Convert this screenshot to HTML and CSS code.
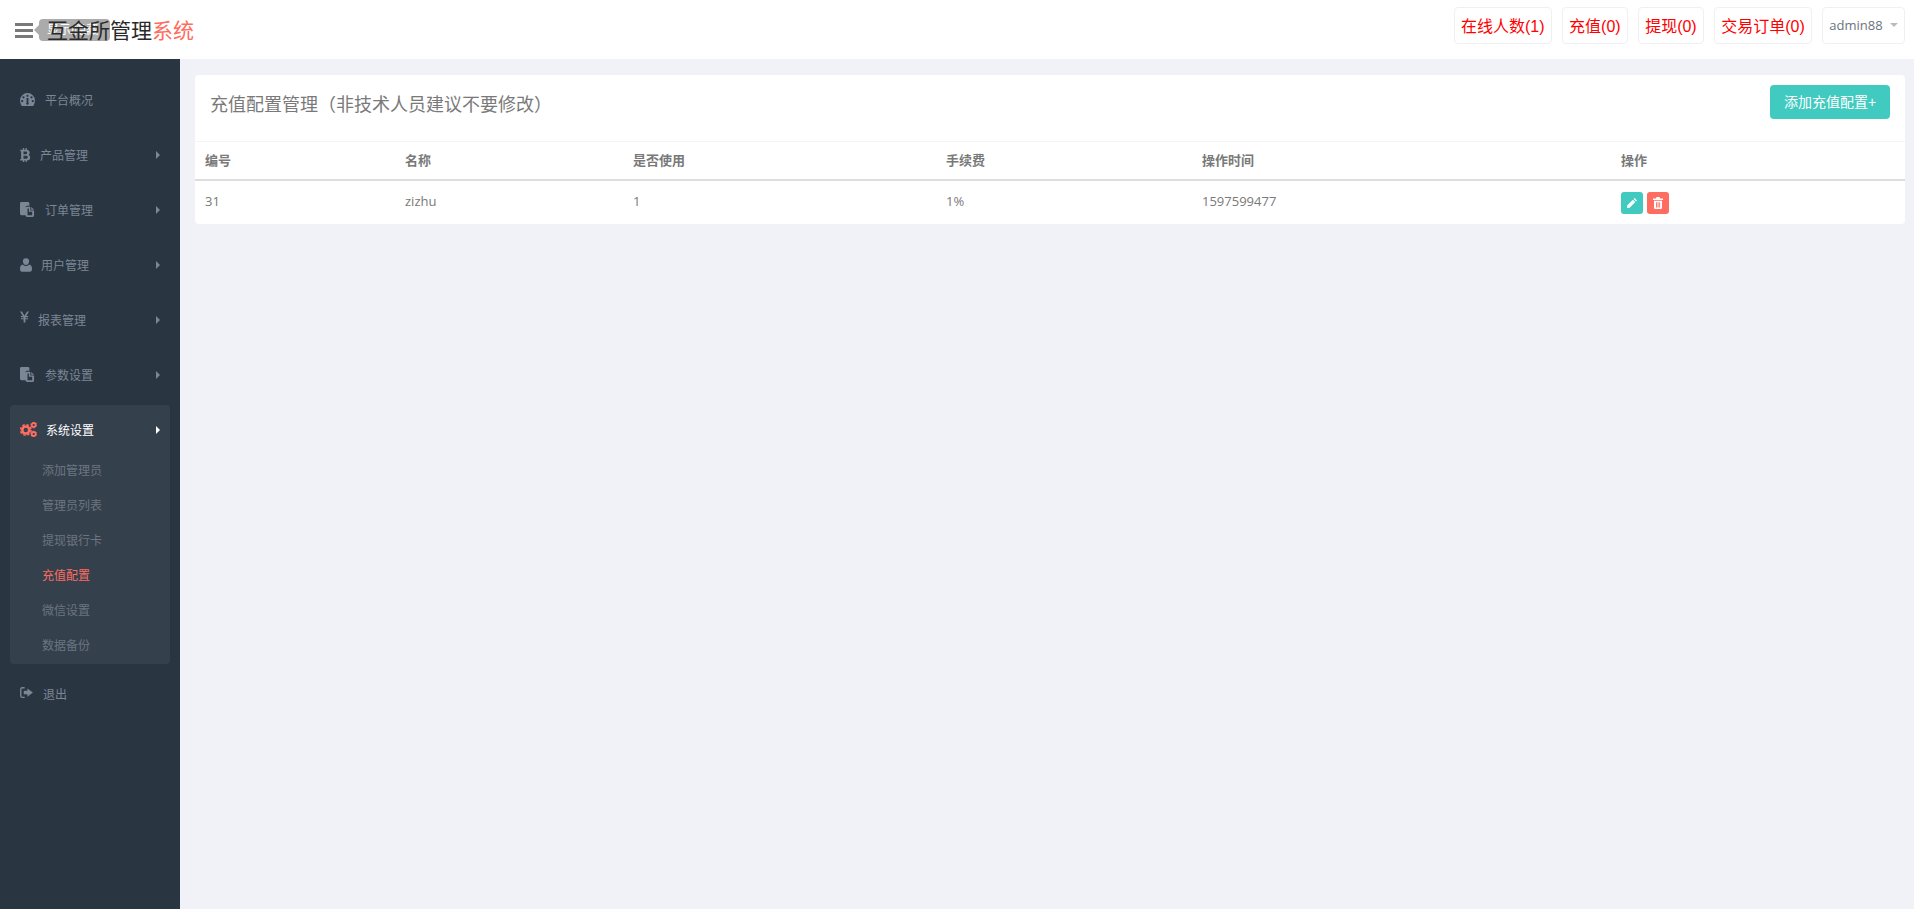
FILE: index.html
```html
<!DOCTYPE html>
<html lang="zh-CN">
<head>
<meta charset="utf-8">
<title>互金所管理系统</title>
<link rel="stylesheet" href="styles.css">
</head>
<body>
<header class="topbar">
  <div class="brand">
    <button class="burger" aria-label="menu"><svg width="18" height="15" viewBox="0 0 18 15"><path d="M0 0h18v3H0zM0 6h18v3H0zM0 12h18v3H0z" fill="#797979"/></svg></button>
    <span class="tip">显示/隐藏</span>
    <span class="logo">互金所管理<em>系统</em></span>
  </div>
  <div class="top-actions">
    <a class="pill">在线人数(1)</a>
    <a class="pill">充值(0)</a>
    <a class="pill">提现(0)</a>
    <a class="pill">交易订单(0)</a>
    <a class="pill user">admin88<i class="caret"></i></a>
  </div>
</header>
<div class="body">
  <aside class="side">
    <a class="item"><svg class="ic dash" viewBox="0 0 16 14"><path fill-rule="evenodd" d="M8 0a8 8 0 0 0-8 8c0 2.400.8 4.400 2 6h12c1.200-1.600 2-3.600 2-6a8 8 0 0 0-8-8zM8 1.800a1.200 1.200 0 1 1 0 2.400 1.200 1.200 0 0 1 0-2.400zM3.700 3.500a1.200 1.200 0 1 1 0 2.400 1.200 1.200 0 0 1 0-2.400zM12.300 3.500a1.200 1.200 0 1 1 0 2.400 1.200 1.200 0 0 1 0-2.400zM2.300 7.500a1.200 1.200 0 1 1 0 2.400 1.200 1.200 0 0 1 0-2.400zM13.700 7.500a1.200 1.200 0 1 1 0 2.400 1.200 1.200 0 0 1 0-2.400zM6.900 5.500h2.200l-.2 4.700a1.400 1.400 0 1 1-1.800 0z"/></svg><span class="t1">平台概况</span></a>
    <a class="item"><svg class="ic btc" viewBox="0 0 12 16"><path fill-rule="evenodd" d="M3 0h1.500v2H6V0h1.500v2.100c2 .3 3.300 1.400 3.300 3.200 0 1.200-.6 2.100-1.700 2.600 1.400.4 2.300 1.400 2.300 2.900 0 2.100-1.500 3.300-3.900 3.500V16H6v-1.700H4.500V16H3v-1.700H0V12.500h1V3.800H0V2h3zM3.700 4v3h2.600c1 0 1.600-.6 1.600-1.500S7.300 4 6.300 4zM3.700 8.800v3.500h3c1.200 0 1.900-.7 1.900-1.750S7.900 8.800 6.700 8.800z"/></svg><span class="t2">产品管理</span><i class="arrow"></i></a>
    <a class="item"><svg class="ic wide" viewBox="0 0 16 16"><use href="#files"/></svg><span class="t3">订单管理</span><i class="arrow"></i></a>
    <a class="item"><svg class="ic person" viewBox="0 0 14 16"><path d="M7 0a3.600 3.600 0 0 1 3.600 3.800C10.600 6 9 8 7 8S3.400 6 3.400 3.800A3.600 3.600 0 0 1 7 0zM3.300 7.400C4.200 8.500 5.500 9.200 7 9.200s2.800-.7 3.700-1.800c2 .4 3.300 2 3.300 4.800 0 2.900-.9 3.800-2.300 3.800H2.300C.9 16 0 15.100 0 12.200c0-2.800 1.300-4.400 3.300-4.800z"/></svg><span class="t4">用户管理</span><i class="arrow"></i></a>
    <a class="item"><svg class="ic yen" viewBox="0 0 10 12"><path d="M0 0h2.200L5 4.700 7.800 0H10L6.900 5H9v1.200H6V7.300h3v1.200H6V12H4V8.500H1V7.300h3V6.200H1V5h2.100z"/></svg><span class="t5">报表管理</span><i class="arrow"></i></a>
    <a class="item"><svg class="ic wide" viewBox="0 0 16 16"><use href="#files"/></svg><span class="t3">参数设置</span><i class="arrow"></i></a>
    <div class="group">
      <a class="item cur"><svg class="gears" viewBox="0 0 17 15"><circle cx="5.800" cy="8" r="3.500" fill="none" stroke="#ff6c60" stroke-width="2.600"/><circle cx="5.800" cy="8" r="5.300" fill="none" stroke="#ff6c60" stroke-width="1.500" stroke-dasharray="2.400 1.760"/><circle cx="13.700" cy="3" r="2" fill="none" stroke="#ff6c60" stroke-width="1.800"/><circle cx="13.700" cy="3" r="2.900" fill="none" stroke="#ff6c60" stroke-width="1" stroke-dasharray="1.500 1.540"/><circle cx="13.700" cy="12" r="2" fill="none" stroke="#ff6c60" stroke-width="1.800"/><circle cx="13.700" cy="12" r="2.900" fill="none" stroke="#ff6c60" stroke-width="1" stroke-dasharray="1.500 1.540"/></svg><span class="t6">系统设置</span><i class="arrow"></i></a>
      <a class="sub">添加管理员</a>
      <a class="sub">管理员列表</a>
      <a class="sub">提现银行卡</a>
      <a class="sub on">充值配置</a>
      <a class="sub">微信设置</a>
      <a class="sub">数据备份</a>
    </div>
    <a class="item"><svg class="ic out" viewBox="0 0 14 12"><path d="M5 0H2.500A2.500 2.500 0 0 0 0 2.500v7A2.500 2.500 0 0 0 2.500 12H5v-1.500H2.500a1 1 0 0 1-1-1v-7a1 1 0 0 1 1-1H5zM8 1.500 14 6 8 10.500V8H4V4h4z"/></svg><span class="t7">退出</span></a>
  </aside>
  <main class="main">
    <section class="card">
      <div class="card-head">
        <h1>充值配置管理（非技术人员建议不要修改）</h1>
        <button class="add">添加充值配置+</button>
      </div>
      <table>
        <thead><tr><th class="c1">编号</th><th class="c2">名称</th><th class="c3">是否使用</th><th class="c4">手续费</th><th class="c5">操作时间</th><th>操作</th></tr></thead>
        <tbody><tr><td>31</td><td>zizhu</td><td>1</td><td>1%</td><td>1597599477</td>
          <td class="ops">
            <button class="op edit"><svg viewBox="0 0 12 12" width="12" height="12"><path d="M8.600 1 11 3.400 10 4.400 7.600 2zM6.900 2.700 9.300 5.100 3.700 10.700 1 11l.3-2.700z" fill="#fff"/></svg></button>
            <button class="op del"><svg viewBox="0 0 12 12" width="12" height="12"><path d="M4.500 0h3L8 1.500h3V3H1V1.500h3zM2 3.800h8V11a1 1 0 0 1-1 1H3a1 1 0 0 1-1-1zM4 5.200V10.500h.9V5.200zM5.600 5.200V10.500h.9V5.200zM7.200 5.200V10.500h.9V5.200z" fill="#fff" fill-rule="evenodd"/></svg></button>
          </td></tr></tbody>
      </table>
    </section>
  </main>
</div>
<svg class="defs" width="0" height="0"><defs><symbol id="files" viewBox="0 0 16 16"><path fill-rule="evenodd" d="M0 1.500A1.500 1.500 0 0 1 1.500 0h7A1.500 1.500 0 0 1 10 1.500V4H7.500A1.500 1.500 0 0 0 6 5.500V14H1.500A1.500 1.500 0 0 1 0 12.500zM7.500 5H11v4h4v5.500a1.500 1.500 0 0 1-1.500 1.500h-6A1.500 1.500 0 0 1 6 14.500v-8A1.500 1.500 0 0 1 7.500 5zM8 7v7h5v-3.500H9.500V7zM12 5.300 15 8.300h-3z"/></symbol></defs></svg>
</body>
</html>
```
FILE: styles.css
```css
* { box-sizing: border-box; }
html, body { margin: 0; height: 100%; }
body {
  background: #f1f2f7;
  font-family: "Liberation Sans", "Noto Sans CJK SC", sans-serif;
  font-size: 14px;
  color: #797979;
  height: 909px;
  overflow: hidden;
}
.defs { position: absolute; }
.topbar {
  height: 59px;
  background: #fff;
  display: flex;
  justify-content: space-between;
  align-items: flex-start;
  padding: 7px 9px 0 15px;
}
.brand { display: flex; align-items: center; position: relative; margin-top: 7px; }
.burger { border: 0; padding: 0; background: none; display: flex; width: 18px; height: 15px; margin: 2px 14px 0 0; }
.tip {
  position: absolute;
  left: 24px;
  top: 5px;
  width: 71px;
  height: 22px;
  background: #ababab;
  border-radius: 4px;
  color: #fff;
  font-size: 12px;
  line-height: 22px;
  padding-left: 8px;
  white-space: nowrap;
}
.tip::before {
  content: "";
  position: absolute;
  left: -5px;
  top: 6px;
  border: 5px solid transparent;
  border-left: 0;
  border-right-color: #ababab;
}
.logo {
  position: relative;
  font-size: 21px;
  line-height: 30px;
  color: #2a2a2a;
  font-family: "Noto Sans CJK SC", sans-serif;
}
.logo em { font-style: normal; color: #ff6c60; }
.top-actions { display: flex; gap: 10px; }
.pill {
  height: 37px;
  padding: 0 6.25px 2px;
  display: flex;
  align-items: center;
  justify-content: center;
  border: 1px solid #eff0f4;
  border-radius: 4px;
  background: #fff;
  color: #f00;
  font-size: 16px;
}
.user { color: #6c7480; font-family: "Open Sans", sans-serif; font-size: 13px; width: 83px; }
.caret { margin-left: 7px; border: 4px solid transparent; border-top: 4px solid #bbb; border-bottom: 0; }
.body { display: flex; height: 850px; }
.side {
  width: 180px;
  flex: none;
  background: #2a3542;
  padding: 13px 10px 0;
  display: flex;
  flex-direction: column;
}
.item {
  height: 55px;
  display: flex;
  align-items: center;
  padding-left: 10px;
  position: relative;
  color: #7c8695;
  font-size: 12px;
  flex: none;
}
.ic { fill: #7c8695; flex: none; }
.dash { width: 15px; height: 13px; }
.btc { width: 11px; height: 14px; }
.wide { width: 15px; height: 15px; }
.person { width: 12px; height: 14px; }
.yen { width: 9px; height: 12px; margin-top: -5px; }
.out { width: 13px; height: 11px; margin-top: -3px; }
.gears { width: 17px; height: 15px; flex: none; }
.t1 { margin-left: 10px; }
.t2 { margin-left: 9px; }
.t3 { margin-left: 10px; }
.t4 { margin-left: 9px; }
.t5 { margin-left: 9px; }
.t6 { margin-left: 9px; }
.t7 { margin-left: 10px; font-size: 12px; }
.arrow {
  position: absolute;
  left: 146px;
  top: 24px;
  border: 4px solid transparent;
  border-left: 4px solid #7c8695;
  border-right: 0;
}
.group {
  margin-top: 3px;
  height: 259px;
  background: #35404d;
  border-radius: 4px;
  flex: none;
  margin-bottom: 2px;
}
.cur { height: 49px; color: #fff; }
.cur .arrow { border-left-color: #fff; top: 21px; }
.sub {
  display: block;
  height: 35px;
  line-height: 35px;
  padding-left: 32px;
  font-size: 12px;
  color: #6c7581;
}
.on { color: #ff6c60; }
.main { flex: 1; padding: 16px 9px 0 15px; min-width: 0; }
.card { background: #fff; border-radius: 4px; height: 149px; overflow: hidden; }
.card-head {
  height: 67px;
  display: flex;
  justify-content: space-between;
  align-items: flex-start;
  padding: 0 15px;
  border-bottom: 1px solid #f4f4f4;
}
h1 { margin: 16px 0 0; font-weight: 400; font-size: 18px; line-height: 29px; color: #797979; }
.add {
  margin-top: 10px;
  width: 120px;
  height: 34px;
  padding: 0 0 2px;
  border: 0;
  border-radius: 4px;
  background: #41cac0;
  color: #fff;
  font: 14px "Liberation Sans", "Noto Sans CJK SC", sans-serif;
}
table { width: 100%; border-collapse: collapse; table-layout: fixed; font: 13px "Open Sans", "Noto Sans CJK SC", sans-serif; }
th { text-align: left; font-weight: 700; font-size: 13px; height: 38px; padding: 0 10px 2px; border-bottom: 2px solid #ddd; color: #797979; }
td { height: 42px; padding: 0 10px 2px; }
.c1 { width: 200px; }
.c2 { width: 228px; }
.c3 { width: 313px; }
.c4 { width: 256px; }
.c5 { width: 419px; }
.ops { padding: 2px 10px 0; font-size: 0; }
.op {
  width: 22px;
  height: 22px;
  border: 0;
  padding: 0;
  border-radius: 3px;
  display: inline-flex;
  align-items: center;
  justify-content: center;
  vertical-align: middle;
}
.edit { background: #41cac0; }
.del { background: #ff6c60; margin-left: 4px; }
```
